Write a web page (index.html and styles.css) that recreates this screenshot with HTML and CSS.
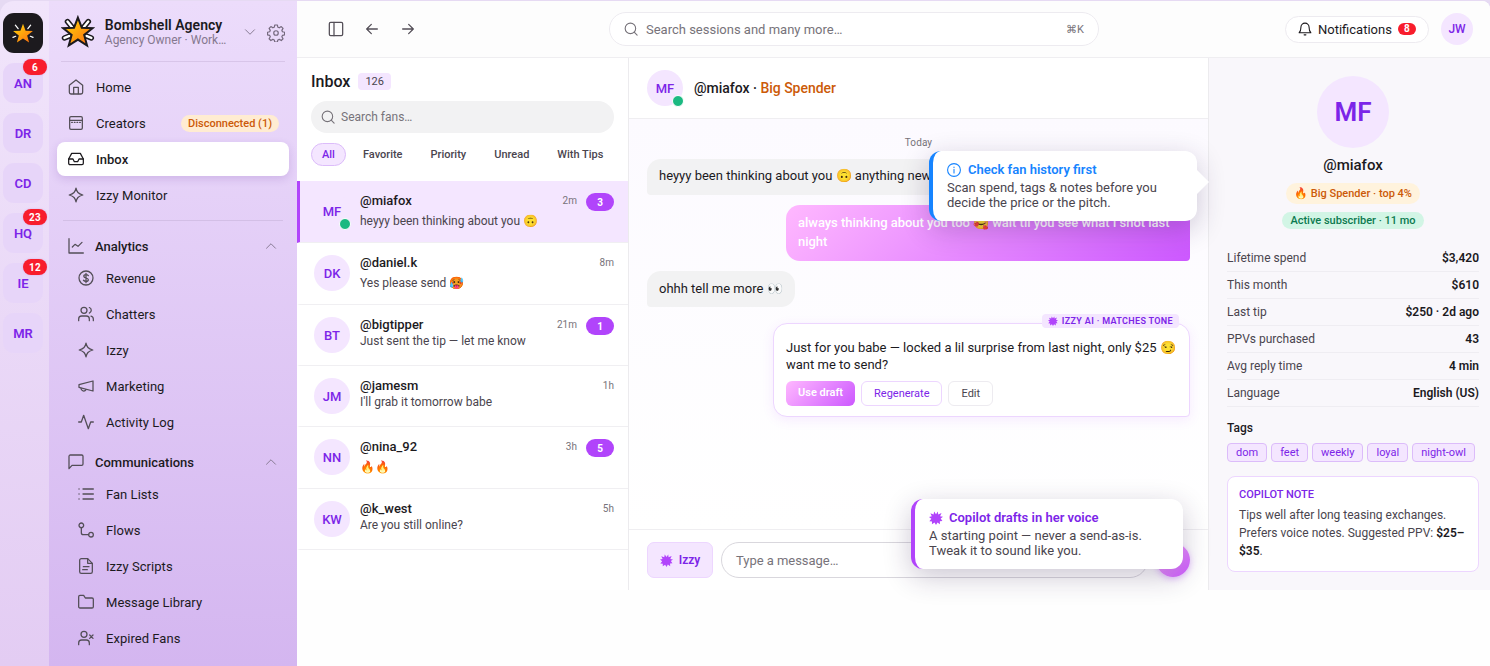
FILE: index.html
```
<!DOCTYPE html>
<html lang="en">
<head>
    <meta charset="UTF-8">
    <meta name="viewport" content="width=device-width, initial-scale=1.0">
    <title>Inbox - Bombshell Agency</title>
    <link rel="stylesheet" href="styles.css">
</head>
<body>
    <svg class="defs" width="0" height="0">
        <defs>
            <linearGradient id="gold" x1="0" y1="0" x2="1" y2="1">
                <stop offset="0.2" stop-color="#ffc50a"/>
                <stop offset="0.85" stop-color="#ff7a0f"/>
            </linearGradient>
            <symbol id="burst" viewBox="0 0 24 24">
                <path d="M12 5.500 15.200 1 15.800 6 21.500 3.500 19 9 24 10 20 13 23 17.200 18.600 17.600 18.800 22.500 14.500 19.600 12 24 9.500 19.800 5 22.500 5.200 17.800 .6 17.400 4 13.200 0 10.200 4.800 9.200 2.400 4 7.800 6 8.800 1z" fill="currentColor" stroke="none"/>
            </symbol>
            <symbol id="spark" viewBox="0 0 24 24">
                <path d="M12 1.800c1.200 5.800 3.200 8.200 10.200 10.200-7 2-9 4.400-10.200 10.200C10.800 16.400 8.800 14 1.800 12c7-2 9-4.400 10.200-10.200z"/>
            </symbol>
            <symbol id="search" viewBox="0 0 24 24">
                <circle cx="11" cy="11" r="9"/><path d="m17.500 17.500 5 5"/>
            </symbol>
            <symbol id="chevron" viewBox="0 0 24 24">
                <path d="m3 16.500 9-9 9 9"/>
            </symbol>
        </defs>
    </svg>
    <div class="app">
        <nav class="rail">
            <div class="rail-logo">
                <svg viewBox="0 0 34 36" width="24" height="25">
                    <g stroke="#fff" stroke-width="1.800" stroke-linecap="round"><path d="M6 6l4 5M28 6l-4 5M2.500 23.500l4-1.500M31.500 23.500l-4-1.500"/></g>
                    <path d="M17 4 20.700 13.900 31.300 14.400 23 20.900 25.800 31.100 17 25.300 8.200 31.100 11 20.900 2.700 14.400 13.300 13.900z" fill="url(#gold)"/>
                </svg>
            </div>
            <div class="tile">AN<span class="count">6</span></div>
            <div class="tile">DR</div>
            <div class="tile">CD</div>
            <div class="tile">HQ<span class="count">23</span></div>
            <div class="tile">IE<span class="count">12</span></div>
            <div class="tile">MR</div>
        </nav>
        <aside class="sidebar">
            <div class="agency">
                <svg class="agency-logo" viewBox="0 0 34 36" width="34" height="36">
                    <g stroke-linecap="round">
                        <path d="M6.500 7.500 11 13M27.500 7.500 23 13M3.500 24l5-2M30.500 24l-5-2" stroke="#1c1a1e" stroke-width="5.500"/>
                        <path d="M6.500 7.500 11 13M27.500 7.500 23 13M3.500 24l5-2M30.500 24l-5-2" stroke="#fff" stroke-width="2.400"/>
                    </g>
                    <path d="M17 3.500 20.900 13.700 31.800 14.200 23.300 21 26.200 31.600 17 25.600 7.800 31.600 10.700 21 2.200 14.200 13.100 13.700z" fill="url(#gold)" stroke="#1c1a1e" stroke-width="2" stroke-miterlimit="6"/>
                </svg>
                <div class="agency-text">
                    <div class="agency-name">Bombshell Agency</div>
                    <div class="agency-role">Agency Owner · Work…</div>
                </div>
                <svg class="icon down"><use href="#chevron"/></svg>
                <svg class="icon gear" viewBox="0 0 24 24"><circle cx="12" cy="12" r="3"/><path d="M10.300 1.500h3.400l.7 2.900 1.900.8 2.600-1.600 2.400 2.400-1.600 2.600.8 1.900 2.900.7v3.400l-2.900.7-.8 1.900 1.600 2.600-2.400 2.400-2.600-1.600-1.900.8-.7 2.900h-3.400l-.7-2.900-1.900-.8-2.600 1.600-2.400-2.400 1.600-2.600-.8-1.900-2.900-.7v-3.400l2.900-.7.8-1.900-1.600-2.600 2.400-2.400 2.600 1.600 1.900-.8z" transform="translate(.1 -.15)"/></svg>
            </div>
            <div class="nav">
                <a class="nav-item"><svg class="icon" viewBox="0 0 24 24"><path d="M2 9.500 12 1.500l10 8V20a2.500 2.500 0 0 1-2.500 2.500h-15A2.500 2.500 0 0 1 2 20z"/><path d="M8.500 22v-9.500h7V22"/></svg>Home</a>
                <a class="nav-item"><svg class="icon" viewBox="0 0 24 24"><rect x="2.500" y="2.500" width="19" height="19" rx="2"/><path d="M2.500 8h19"/><path d="M5.500 11.200h13" stroke-dasharray="1 3"/></svg>Creators<span class="warn">Disconnected (1)</span></a>
                <a class="nav-item active"><svg class="icon" viewBox="0 0 24 24"><path d="M1 12h6.500l2 4h5l2-4H23"/><path d="M5.500 3.500h13L23 12v6.500a2 2 0 0 1-2 2H3a2 2 0 0 1-2-2V12z"/></svg>Inbox</a>
                <a class="nav-item"><svg class="icon"><use href="#spark"/></svg>Izzy Monitor</a>
            </div>
            <div class="divider"></div>
            <div class="nav-group">
                <div class="group-title"><svg class="icon" viewBox="0 0 24 24"><path d="M1.500 1v21.500H23"/><path d="m6.500 13.500 4-4 4.500 3 6-6"/></svg>Analytics<svg class="icon up"><use href="#chevron"/></svg></div>
                <a class="nav-item"><svg class="icon" viewBox="0 0 24 24"><circle cx="12" cy="12" r="10.500"/><path d="M15.500 8.500c-.8-1-2-1.500-3.500-1.500-2 0-3.300 1-3.300 2.500 0 3.500 6.800 1.500 6.800 5 0 1.500-1.500 2.500-3.500 2.500-1.600 0-3-.6-3.800-1.600M12 5v14"/></svg>Revenue</a>
                <a class="nav-item"><svg class="icon" viewBox="0 0 24 24"><circle cx="9" cy="6.500" r="4.500"/><path d="M1 22v-2.500C1 17 3 15 5.500 15h7c2.500 0 4.500 2 4.500 4.500V22M17 2.300a4.500 4.500 0 0 1 0 8.400M19.500 15.300a4.500 4.500 0 0 1 3.500 4.300V22"/></svg>Chatters</a>
                <a class="nav-item"><svg class="icon"><use href="#spark"/></svg>Izzy</a>
                <a class="nav-item"><svg class="icon" viewBox="0 0 24 24"><path d="m1.500 10 21-5.500v15L1.500 14z"/><path d="M12 17.500a4 4 0 0 1-7.500-2"/></svg>Marketing</a>
                <a class="nav-item"><svg class="icon" viewBox="0 0 24 24"><path d="M23 12h-4l-3.500 10L8.500 2 5 12H1"/></svg>Activity Log</a>
            </div>
            <div class="nav-group">
                <div class="group-title"><svg class="icon" viewBox="0 0 24 24"><path d="M22.500 15a2 2 0 0 1-2 2H6l-4.500 5V3.500a2 2 0 0 1 2-2h17a2 2 0 0 1 2 2z"/></svg>Communications<svg class="icon up"><use href="#chevron"/></svg></div>
                <a class="nav-item"><svg class="icon" viewBox="0 0 24 24"><path d="M7.500 4.500H23M7.500 12H23M7.500 19.500H23M1.500 4.500h.1M1.500 12h.1M1.500 19.500h.1"/></svg>Fan Lists</a>
                <a class="nav-item"><svg class="icon" viewBox="0 0 24 24"><circle cx="5" cy="5" r="3.500"/><circle cx="19.500" cy="19" r="3.500"/><path d="M5 8.500V16a3 3 0 0 0 3 3h8"/></svg>Flows</a>
                <a class="nav-item"><svg class="icon" viewBox="0 0 24 24"><path d="M14.500 1H5a2.500 2.500 0 0 0-2.500 2.500v17A2.500 2.500 0 0 0 5 23h14a2.500 2.500 0 0 0 2.500-2.500V8z"/><path d="M14.500 1v7h7M8 13h8.500M7 17.500h7"/></svg>Izzy Scripts</a>
                <a class="nav-item"><svg class="icon" viewBox="0 0 24 24"><path d="M23 19a2 2 0 0 1-2 2H3a2 2 0 0 1-2-2V4a2 2 0 0 1 2-2h5.500l2.500 4h10a2 2 0 0 1 2 2z"/></svg>Message Library</a>
                <a class="nav-item"><svg class="icon" viewBox="0 0 24 24"><circle cx="9" cy="6.500" r="4.500"/><path d="M1 22v-2.500C1 17 3 15 5.500 15h7c2.500 0 4.500 2 4.500 4.500V22M17.500 7.500l5 5M22.500 7.500l-5 5"/></svg>Expired Fans</a>
            </div>
        </aside>
        <div class="main">
            <header class="topbar">
                <div class="history">
                    <svg class="icon" viewBox="0 0 24 24"><rect x="2" y="2" width="20" height="20" rx="2"/><path d="M9 2v20"/></svg>
                    <svg class="icon" viewBox="0 0 24 24"><path d="M20 12H4M11 5l-7 7 7 7"/></svg>
                    <svg class="icon" viewBox="0 0 24 24"><path d="M4 12h16M13 5l7 7-7 7"/></svg>
                </div>
                <div class="global-search">
                    <svg class="icon"><use href="#search"/></svg>
                    <span>Search sessions and many more…</span>
                    <kbd>⌘K</kbd>
                </div>
                <div class="account">
                    <button class="notif"><svg class="icon" viewBox="0 0 24 24"><path d="M19 9A7 7 0 0 0 5 9c0 7-3 9.500-3 9.500h20S19 16 19 9"/><path d="M10.500 22h3"/></svg>Notifications<span>8</span></button>
                    <div class="avatar me">JW</div>
                </div>
            </header>
            <div class="workspace">
                <section class="inbox">
                    <div class="inbox-head">
                        <h1>Inbox <span>126</span></h1>
                        <div class="fan-search"><svg class="icon"><use href="#search"/></svg>Search fans…</div>
                        <div class="tabs"><span class="on">All</span><span>Favorite</span><span>Priority</span><span>Unread</span><span>With Tips</span></div>
                    </div>
                    <div class="thread selected">
                        <div class="avatar">MF<i class="online"></i></div>
                        <div class="thread-text"><b>@miafox</b><p class="emo">heyyy been thinking about you 🙃</p></div>
                        <time>2m</time><span class="unread">3</span>
                    </div>
                    <div class="thread">
                        <div class="avatar">DK</div>
                        <div class="thread-text"><b>@daniel.k</b><p class="emo">Yes please send 🥵</p></div>
                        <time>8m</time>
                    </div>
                    <div class="thread">
                        <div class="avatar">BT</div>
                        <div class="thread-text"><b>@bigtipper</b><p>Just sent the tip — let me know</p></div>
                        <time>21m</time><span class="unread">1</span>
                    </div>
                    <div class="thread">
                        <div class="avatar">JM</div>
                        <div class="thread-text"><b>@jamesm</b><p>I'll grab it tomorrow babe</p></div>
                        <time>1h</time>
                    </div>
                    <div class="thread">
                        <div class="avatar">NN</div>
                        <div class="thread-text"><b>@nina_92</b><p class="emo">🔥🔥</p></div>
                        <time>3h</time><span class="unread">5</span>
                    </div>
                    <div class="thread">
                        <div class="avatar">KW</div>
                        <div class="thread-text"><b>@k_west</b><p>Are you still online?</p></div>
                        <time>5h</time>
                    </div>
                </section>
                <section class="chat">
                    <div class="chat-head">
                        <div class="avatar">MF<i class="online"></i></div>
                        <div class="chat-title">@miafox · <span>Big Spender</span></div>
                    </div>
                    <div class="messages">
                        <div class="day">Today</div>
                        <div class="bubble in">heyyy been thinking about you 🙃 anything new for me?</div>
                        <div class="bubble out">always thinking about you too 🥰 wait til you see what I shot last night</div>
                        <div class="bubble in">ohhh tell me more 👀</div>
                        <div class="draft">
                            <div class="draft-tag"><svg width="10" height="10"><use href="#burst"/></svg>IZZY AI · MATCHES TONE</div>
                            <p>Just for you babe — locked a lil surprise from last night, only $25 😏 want me to send?</p>
                            <div class="draft-actions">
                                <button class="primary">Use draft</button>
                                <button class="regen">Regenerate</button>
                                <button>Edit</button>
                            </div>
                        </div>
                        <div class="tip tip-history">
                            <h3><svg class="icon" viewBox="0 0 24 24"><circle cx="12" cy="12" r="11"/><path d="M12 11v6M12 7v.5"/></svg>Check fan history first</h3>
                            <p>Scan spend, tags &amp; notes before you decide the price or the pitch.</p>
                        </div>
                    </div>
                    <div class="composer">
                        <button class="izzy"><svg width="13" height="13"><use href="#burst"/></svg>Izzy</button>
                        <div class="message-input">Type a message…</div>
                        <button class="send"></button>
                        <div class="tip tip-voice">
                            <h3><svg width="14" height="14"><use href="#burst"/></svg>Copilot drafts in her voice</h3>
                            <p>A starting point — never a send-as-is. Tweak it to sound like you.</p>
                        </div>
                    </div>
                </section>
                <aside class="profile">
                    <div class="avatar big">MF</div>
                    <div class="profile-name">@miafox</div>
                    <div class="pill spender">🔥 Big Spender · top 4%</div>
                    <div class="pill subscriber">Active subscriber · 11 mo</div>
                    <dl class="stats">
                        <div><dt>Lifetime spend</dt><dd>$3,420</dd></div>
                        <div><dt>This month</dt><dd>$610</dd></div>
                        <div><dt>Last tip</dt><dd>$250 · 2d ago</dd></div>
                        <div><dt>PPVs purchased</dt><dd>43</dd></div>
                        <div><dt>Avg reply time</dt><dd>4 min</dd></div>
                        <div><dt>Language</dt><dd>English (US)</dd></div>
                    </dl>
                    <h2>Tags</h2>
                    <div class="tags"><span>dom</span><span>feet</span><span>weekly</span><span>loyal</span><span>night-owl</span></div>
                    <div class="note">
                        <h4>COPILOT NOTE</h4>
                        <p>Tips well after long teasing exchanges. Prefers voice notes. Suggested PPV: <b>$25–$35</b>.</p>
                    </div>
                </aside>
            </div>
        </div>
    </div>
</body>
</html>
```
FILE: styles.css
```
* {
    box-sizing: border-box;
}

body {
    margin: 0;
    font-family: Roboto, sans-serif;
    font-size: 13px;
    color: #1c1a1e;
    background-color: #e6daf3;
    overflow: hidden;
}

h1, h2, h3, h4, p, dl, dd {
    margin: 0;
}

button {
    font: inherit;
    padding: 0;
    background: none;
    border: none;
}

.defs {
    position: absolute;
}

.icon {
    width: 16px;
    height: 16px;
    fill: none;
    stroke: #534e57;
    stroke-width: 1.9;
    stroke-linecap: round;
    stroke-linejoin: round;
    flex: none;
}

.app {
    display: flex;
    height: 665px;
    margin-top: 1px;
    border-radius: 14px 8px 0 0;
    overflow: hidden;
}

/* agency rail */
.rail {
    width: 49px;
    padding: 12px 0 0 3px;
    display: flex;
    flex-direction: column;
    gap: 10px;
    background: linear-gradient(#f1e5fb, #e3ccf3);
    flex: none;
}

.rail-logo,
.tile {
    width: 40px;
    height: 40px;
    border-radius: 11px;
    display: flex;
    align-items: center;
    justify-content: center;
    position: relative;
}

.rail-logo {
    background-color: #1c1a1e;
}

.tile {
    background-color: #e7d5f9;
    color: #7c25e8;
    font-weight: 600;
    font-size: 13px;
}

.count {
    position: absolute;
    top: -4px;
    left: 20px;
    width: 24px;
    height: 16px;
    border-radius: 8px;
    background-color: #f81d2c;
    box-shadow: 0 0 2px #d9a9e6;
    color: #fff;
    font-size: 10px;
    font-weight: 700;
    line-height: 17px;
    text-align: center;
    letter-spacing: .3px;
}

/* sidebar */
.sidebar {
    width: 248px;
    padding: 0 8px;
    background: linear-gradient(#ecdcfb, #d4b6f0);
    flex: none;
}

.agency {
    height: 61px;
    margin: 0 4px 8px;
    padding-top: 2px;
    display: flex;
    align-items: center;
    border-bottom: 1px solid #d8c5e9;
}

.agency-text {
    margin-left: 10px;
    width: 140px;
    white-space: nowrap;
}

.agency-name {
    font-size: 14px;
    font-weight: 600;
    line-height: 16px;
    letter-spacing: .03px;
}

.agency-role {
    font-size: 12px;
    line-height: 14px;
    color: #85788f;
}

.agency .down {
    width: 12px;
    height: 12px;
    transform: rotate(180deg);
    stroke: #85788f;
}

.agency .gear {
    width: 18px;
    height: 18px;
    margin-left: 11px;
    margin-top: 1px;
    stroke: #75697e;
    stroke-width: 1.6;
}

.nav {
    display: flex;
    flex-direction: column;
    gap: 2px;
}

.divider {
    margin: 8px 6px 10px;
    height: 1px;
    background-color: #d3bfe6;
}

.nav-item {
    height: 34px;
    padding: 0 10px 0 11px;
    display: flex;
    align-items: center;
    gap: 12px;
    border-radius: 8px;
    letter-spacing: .04px;
}

.nav-item.active {
    background-color: #fff;
    font-weight: 500;
    box-shadow: 0 3px 8px rgba(90, 30, 150, .16);
}

.nav-item.active .icon {
    stroke: #1c1a1e;
}

.warn {
    margin-left: auto;
    padding: 0 7px;
    border-radius: 9px;
    background-color: #ffecd2;
    color: #cc5a08;
    font-size: 11px;
    font-weight: 500;
    line-height: 17px;
    letter-spacing: 0;
}

.nav-group .nav-item {
    margin-left: 10px;
    margin-bottom: 2px;
}

.group-title {
    height: 30px;
    padding: 0 12px 0 11px;
    display: flex;
    align-items: center;
    gap: 11px;
    font-weight: 500;
}

.nav-group + .nav-group {
    padding-top: 6px;
}

.group-title .up {
    width: 12px;
    height: 12px;
    margin-left: auto;
    stroke: #85788f;
}

/* top bar */
.main {
    flex: 1;
    min-width: 0;
    background-color: #fefefe;
}

.topbar {
    height: 57px;
    padding: 0 17px 0 31px;
    display: flex;
    align-items: center;
    background-color: #fdfdfd;
    border-bottom: 1px solid #efeef1;
}

.history {
    width: 281px;
    display: flex;
    gap: 20px;
}

.global-search {
    width: 490px;
    height: 34px;
    padding: 0 14px;
    display: flex;
    align-items: center;
    gap: 8px;
    border: 1px solid #edebf0;
    border-radius: 17px;
    background-color: #fff;
    color: #77737a;
}

.global-search .icon,
.fan-search .icon {
    width: 14px;
    height: 14px;
    stroke: #77737a;
}

.global-search kbd {
    margin-left: auto;
    font-family: inherit;
    font-size: 11px;
}

.account {
    margin-left: auto;
    display: flex;
    align-items: center;
    gap: 12px;
}

.notif {
    width: 144px;
    height: 27px;
    padding: 0 0 0 12px;
    display: flex;
    align-items: center;
    border: 1px solid #edebf0;
    border-radius: 14px;
    background-color: #fff;
    color: #1c1a1e;
}

.notif .icon {
    width: 14px;
    height: 14px;
    margin-right: 6px;
    stroke: #1c1a1e;
}

.notif span {
    margin-left: 6px;
    width: 18px;
    border-radius: 6px;
    background-color: #f81d2c;
    color: #fff;
    font-size: 10px;
    font-weight: 700;
    line-height: 12px;
    text-align: center;
    flex: none;
}

.avatar {
    width: 36px;
    height: 36px;
    border-radius: 50%;
    background-color: #f4e6ff;
    color: #7c25e8;
    font-weight: 500;
    display: flex;
    align-items: center;
    justify-content: center;
    position: relative;
    flex: none;
}

.avatar.me {
    width: 32px;
    height: 32px;
    font-size: 12px;
}

.online {
    position: absolute;
    right: -1px;
    bottom: -1px;
    width: 12px;
    height: 12px;
    border: 1px solid #fff;
    border-radius: 50%;
    background-color: #1bb981;
}

.workspace {
    display: flex;
    height: 532px;
}

/* thread list */
.inbox {
    width: 332px;
    background-color: #fff;
    border-right: 1px solid #ecebee;
    flex: none;
}

.inbox-head {
    height: 123px;
    padding: 14px 14px 0;
}

.inbox h1 {
    display: flex;
    align-items: center;
    gap: 8px;
    height: 18px;
    font-size: 16px;
    font-weight: 500;
}

.inbox h1 span {
    padding: 0 7px;
    border-radius: 4px;
    background-color: #f4e6ff;
    color: #4a454e;
    font-size: 11px;
    font-weight: 400;
    line-height: 17px;
}

.fan-search {
    height: 32px;
    margin-top: 11px;
    padding: 0 10px;
    display: flex;
    align-items: center;
    gap: 6px;
    border-radius: 16px;
    background-color: #f2f2f3;
    color: #77737a;
    font-size: 12px;
}

.tabs {
    margin-top: 10px;
    display: flex;
    gap: 6px;
    font-size: 11px;
    font-weight: 500;
    color: #4a454e;
}

.tabs span {
    padding: 0 10px;
    border: 1px solid transparent;
    border-radius: 12px;
    line-height: 21px;
    white-space: nowrap;
}

.tabs .on {
    border-color: #dcbcfa;
    background-color: #f4e6ff;
    color: #7c25e8;
}

.thread {
    display: flex;
    padding: 12px 14px 12px 14px;
    border-left: 3px solid transparent;
    border-bottom: 1px solid #f0eff2;
}

.thread.selected {
    background-color: #f4e6ff;
    border-left-color: #b144fb;
}

.thread-text {
    margin-left: 10px;
    flex: 1;
}

.thread-text b {
    display: block;
    font-weight: 500;
    line-height: 16px;
}

.thread-text p {
    font-size: 12px;
    line-height: 16px;
    color: #4a454e;
    white-space: nowrap;
}

.thread-text p.emo {
    padding-top: 3px;
    line-height: 18px;
}

.thread time {
    font-size: 10px;
    line-height: 15px;
    color: #77737a;
}

.unread {
    width: 28px;
    height: 18px;
    margin-left: 9px;
    border-radius: 9px;
    background-color: #b144fb;
    color: #fff;
    font-size: 10px;
    font-weight: 700;
    line-height: 19px;
    text-align: center;
}

/* conversation */
.chat {
    flex: 1;
    display: flex;
    flex-direction: column;
    background-color: #fff;
}

.chat-head {
    height: 61px;
    padding: 0 18px;
    display: flex;
    align-items: center;
    gap: 11px;
    border-bottom: 1px solid #efeef1;
}

.chat-title {
    font-size: 14px;
    font-weight: 500;
    letter-spacing: -.02px;
}

.chat-title span {
    color: #cc5a08;
}

.messages {
    flex: 1;
    padding: 17px 18px 0;
    display: flex;
    flex-direction: column;
    align-items: flex-start;
    gap: 10px;
    position: relative;
    background: linear-gradient(#fcfaff, #fff);
}

.day {
    align-self: center;
    font-size: 10px;
    line-height: 13px;
    letter-spacing: .1px;
    color: #77737a;
}

.bubble {
    max-width: 404px;
    padding: 8px 12px;
    border-radius: 14px;
    line-height: 20px;
}

.bubble.in {
    background-color: #f2f2f3;
    border-bottom-left-radius: 4px;
}

.day + .bubble.in {
    padding: 7px 12px 9px;
}

.bubble.out {
    align-self: flex-end;
    padding: 8px 12px 10px;
    line-height: 19px;
    background: linear-gradient(135deg, #ffb8ff, #cc58ff);
    border-bottom-right-radius: 4px;
    color: #fff;
    font-weight: 500;
    letter-spacing: -.03px;
}

.draft {
    align-self: flex-end;
    width: 417px;
    height: 94px;
    margin-top: 6px;
    padding: 15px 12px 0;
    border: 1px solid #edd6ff;
    border-radius: 14px 14px 4px 14px;
    background-color: #fff;
    box-shadow: 0 3px 12px rgba(177, 68, 251, .1);
    position: relative;
}

.draft p {
    line-height: 17px;
}

.draft-tag {
    position: absolute;
    top: -10px;
    right: 10px;
    height: 14px;
    padding: 0 6px;
    display: flex;
    align-items: center;
    gap: 4px;
    border-radius: 4px;
    background-color: #f4e6ff;
    color: #7c25e8;
    font-size: 9px;
    font-weight: 600;
    letter-spacing: .34px;
}

.draft-tag svg,
.izzy svg,
.tip-voice svg {
    color: #b144fb;
}

.draft-actions {
    margin-top: 8px;
    display: flex;
    gap: 6px;
}

.draft-actions button {
    height: 25px;
    padding: 0 12px;
    border: 1px solid #edebf0;
    border-radius: 6px;
    color: #4a454e;
    font-size: 11px;
}

.draft-actions .regen {
    border-color: #edd6ff;
    color: #7c25e8;
}

.draft-actions .primary {
    border: none;
    padding-bottom: 2px;
    background: linear-gradient(135deg, #ffb8ff, #cc58ff);
    color: #fff;
    font-weight: 600;
}

.composer {
    height: 61px;
    padding: 0 18px;
    display: flex;
    align-items: center;
    gap: 8px;
    border-top: 1px solid #efeef1;
    position: relative;
}

.izzy {
    width: 66px;
    height: 36px;
    display: flex;
    align-items: center;
    justify-content: center;
    gap: 6px;
    border: 1px solid #edd6ff;
    border-radius: 7px;
    background-color: #f4e6ff;
    color: #7c25e8;
    font-size: 12px;
    font-weight: 600;
}

.message-input {
    flex: 1;
    height: 36px;
    padding: 0 14px;
    border: 1px solid #d9d7dd;
    border-radius: 18px;
    line-height: 35px;
    color: #77737a;
    letter-spacing: -.03px;
}

.send {
    width: 34px;
    height: 34px;
    border-radius: 50%;
    background: linear-gradient(135deg, #ffb8ff, #cc58ff);
    box-shadow: 0 2px 6px rgba(177, 68, 251, .35);
}

/* coaching tips */
.tip {
    position: absolute;
    height: 70px;
    padding: 11px 14px 0;
    border-left: 4px solid #1684ff;
    border-radius: 12px;
    background-color: #fff;
    box-shadow: 0 8px 28px rgba(40, 20, 70, .24);
    color: #4a454e;
    z-index: 2;
}

.tip h3 {
    display: flex;
    align-items: center;
    gap: 7px;
    font-size: 13px;
    font-weight: 600;
    line-height: 16px;
    color: #1684ff;
}

.tip h3 .icon {
    width: 14px;
    height: 14px;
    stroke: #1684ff;
}

.tip p {
    margin-top: 2px;
    line-height: 15px;
}

.tip-history {
    top: 32px;
    right: 11px;
    width: 268px;
}

.tip-history::after {
    content: "";
    position: absolute;
    top: 19px;
    right: -12px;
    border: 12px solid transparent;
    border-right: none;
    border-left-color: #fff;
}

.tip-voice {
    top: -31px;
    right: 25px;
    width: 272px;
    border-left-color: #b144fb;
}

.tip-voice h3 {
    gap: 6px;
    color: #7c25e8;
}

/* fan profile */
.profile {
    width: 282px;
    padding: 18px 11px 0 18px;
    border-left: 1px solid #ecebee;
    background-color: #f9f7fb;
    flex: none;
    display: flex;
    flex-direction: column;
}

.profile .big {
    width: 72px;
    height: 72px;
    align-self: center;
    font-size: 26px;
    font-weight: 600;
}

.profile-name {
    margin-top: 8px;
    text-align: center;
    font-size: 15px;
    font-weight: 500;
    line-height: 18px;
}

.pill {
    align-self: center;
    padding: 0 8px;
    border-radius: 11px;
    font-size: 11px;
    font-weight: 500;
}

.spender {
    margin-top: 9px;
    line-height: 21px;
    background-color: #fff3dd;
    color: #cc5a08;
}

.subscriber {
    margin-top: 8px;
    line-height: 17px;
    background-color: #d2f5e5;
    color: #0c7a50;
}

.stats {
    margin-top: 16px;
}

.stats div {
    display: flex;
    justify-content: space-between;
    height: 27px;
    line-height: 26px;
    border-bottom: 1px solid #efedf2;
    font-size: 12px;
}

.stats dt {
    color: #4a454e;
}

.stats dd {
    font-weight: 600;
}

.profile h2 {
    margin-top: 14px;
    font-size: 12px;
    font-weight: 500;
    line-height: 14px;
}

.tags {
    margin-top: 8px;
    display: flex;
    gap: 4px;
}

.tags span {
    padding: 0 8px;
    border: 1px solid #dcbcfa;
    border-radius: 4px;
    background-color: #f4e6ff;
    color: #7c25e8;
    font-size: 11px;
    line-height: 17px;
}

.note {
    margin-top: 14px;
    height: 96px;
    padding: 11px 11px 0;
    border: 1px solid #edd6ff;
    border-radius: 8px;
    background-color: #fff;
}

.note h4 {
    font-size: 11px;
    font-weight: 500;
    line-height: 14px;
    color: #7c25e8;
}

.note p {
    margin-top: 4px;
    font-size: 12px;
    line-height: 18px;
    color: #4a454e;
}

.note b {
    font-weight: 600;
    color: #1c1a1e;
}
```
